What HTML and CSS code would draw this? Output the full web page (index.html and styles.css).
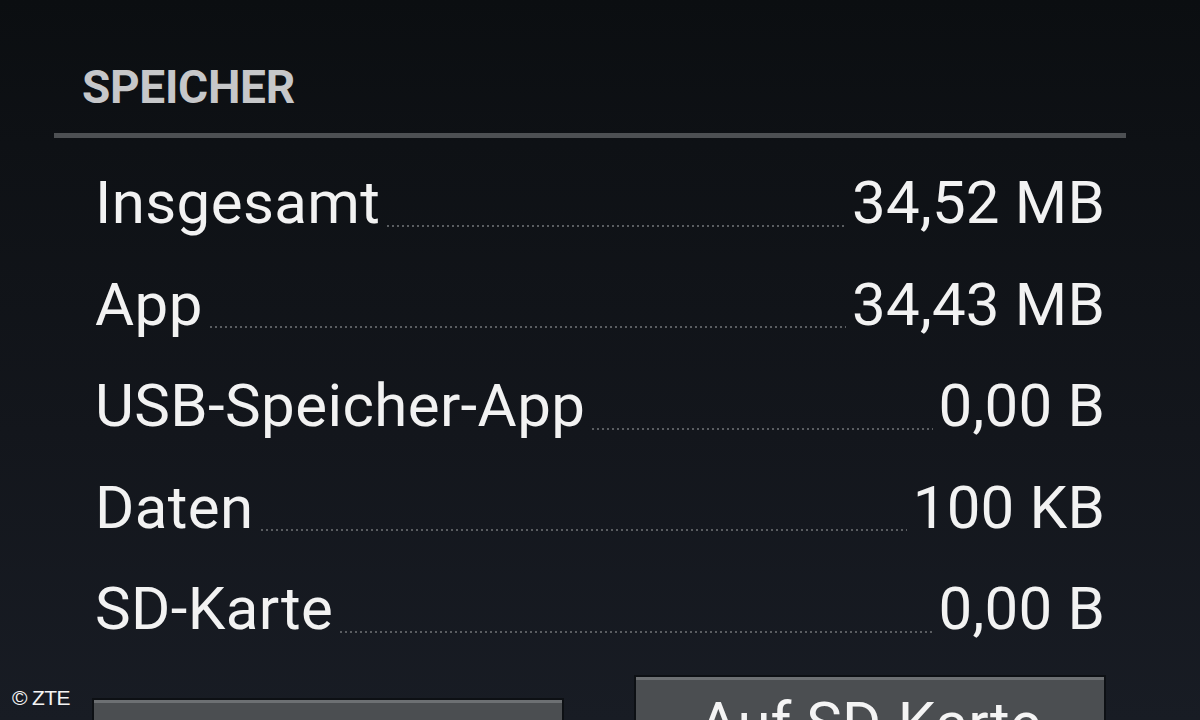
FILE: index.html
```html
<!DOCTYPE html>
<html lang="de">
<head>
<meta charset="utf-8">
<title>Speicher</title>
<link rel="stylesheet" href="styles.css">
</head>
<body>
<div class="page">
  <div class="section-header">SPEICHER</div>
  <div class="divider"></div>
  <div class="rows">
    <div class="row"><span class="label">Insgesamt</span><span class="dots"></span><span class="value">34,52 MB</span></div>
    <div class="row"><span class="label">App</span><span class="dots"></span><span class="value">34,43 MB</span></div>
    <div class="row"><span class="label">USB-Speicher-App</span><span class="dots"></span><span class="value">0,00 B</span></div>
    <div class="row"><span class="label">Daten</span><span class="dots"></span><span class="value">100 KB</span></div>
    <div class="row"><span class="label">SD-Karte</span><span class="dots"></span><span class="value">0,00 B</span></div>
  </div>
  <div class="buttons">
    <div class="btn btn-left">Daten löschen</div>
    <div class="btn btn-right">Auf SD-Karte verschieben</div>
  </div>
  <div class="credit">© ZTE</div>
</div>
</body>
</html>
```
FILE: styles.css
```css
html, body {
  margin: 0;
  padding: 0;
}
body {
  width: 1200px;
  height: 720px;
  overflow: hidden;
  background: linear-gradient(to bottom, #0b0e11 0%, #0e1115 20%, #13161c 60%, #181c24 100%);
  font-family: Roboto, "Noto Sans", sans-serif;
  color: #f2f2f2;
}
.page {
  position: relative;
  width: 1200px;
  height: 720px;
  overflow: hidden;
}
.section-header {
  padding: 64px 0 0 82px;
  font-size: 46px;
  line-height: 46px;
  font-weight: 700;
  color: #c6c7c9;
  letter-spacing: -0.3px;
}
.divider {
  margin: 23px 0 0 54px;
  width: 1072px;
  height: 5px;
  background: #4d5053;
}
.rows {
  padding: 14px 95px 0 95px;
}
.row {
  display: flex;
  height: 101.6px;
  line-height: 101.6px;
  font-size: 60px;
  white-space: nowrap;
}
.label {
  flex: none;
  letter-spacing: 0.4px;
}
.value {
  flex: none;
  letter-spacing: 0.2px;
}
.dots {
  flex: 1;
  align-self: flex-end;
  height: 2px;
  margin: 0 6px 27px 7px;
  background-image: repeating-linear-gradient(to right, #5a5d61 0 2px, transparent 2px 5px);
}
.buttons {
  display: flex;
  align-items: flex-start;
  gap: 74px;
  padding: 17px 0 0 94px;
}
.btn {
  box-sizing: border-box;
  width: 468px;
  height: 140px;
  background: #4b4e51;
  border-top: 3px solid #6d7073;
  box-shadow: 0 0 0 2px #0d1014;
  color: #f4f4f4;
  font-size: 60px;
  line-height: 1.2;
  text-align: center;
  padding-top: 8px;
}
.btn-left {
  margin-top: 23px;
  padding-top: 14px;
}
.credit {
  position: absolute;
  left: 12px;
  top: 685px;
  font-family: "Liberation Sans", Arial, sans-serif;
  font-size: 21px;
  line-height: 26px;
  color: #f4f4f4;
  letter-spacing: -0.6px;
}
```
